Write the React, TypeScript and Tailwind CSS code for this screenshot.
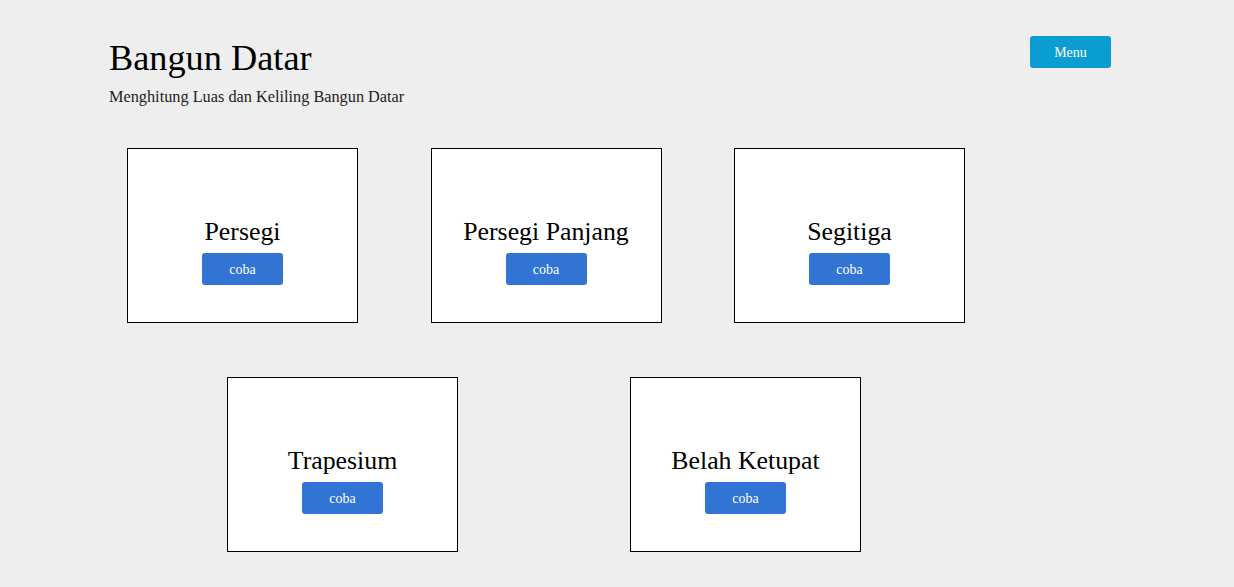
const serif = { fontFamily: '"Liberation Serif", "Times New Roman", serif' };

const row1 = ["Persegi", "Persegi Panjang", "Segitiga"];
const row2 = ["Trapesium", "Belah Ketupat"];

function Card({ title }: { title: string }) {
  return (
    <div className="w-[231px] h-[175px] border border-black bg-white flex flex-col items-center pt-[69px]">
      <h2 className="text-[25.8px] leading-[28px] text-black">{title}</h2>
      <button className="mt-[7px] w-[81px] h-[32px] rounded-[3px] bg-[#3174d3] text-white text-[14px]">
        coba
      </button>
    </div>
  );
}

export default function App() {
  return (
    <div className="min-h-[587px] bg-[#eeeeee] text-black" style={serif}>
      <header className="flex items-start justify-between pl-[109px] pr-[123px] pt-[36px]">
        <div>
          <h1 className="mt-[2px] text-[36.3px] leading-[40px]">Bangun Datar</h1>
          <p className="mt-[10px] text-[16.3px] leading-[18px] text-[#222]">
            Menghitung Luas dan Keliling Bangun Datar
          </p>
        </div>
        <button className="w-[81px] h-[32px] rounded-[3px] bg-[#0a9dd1] text-white text-[14px]">
          Menu
        </button>
      </header>

      <div className="flex gap-[72.5px] pl-[127px] mt-[42px]">
        {row1.map((t) => (
          <Card key={t} title={t} />
        ))}
      </div>

      <div className="flex gap-[172px] pl-[227px] mt-[54px] pb-[35px]">
        {row2.map((t) => (
          <Card key={t} title={t} />
        ))}
      </div>
    </div>
  );
}
